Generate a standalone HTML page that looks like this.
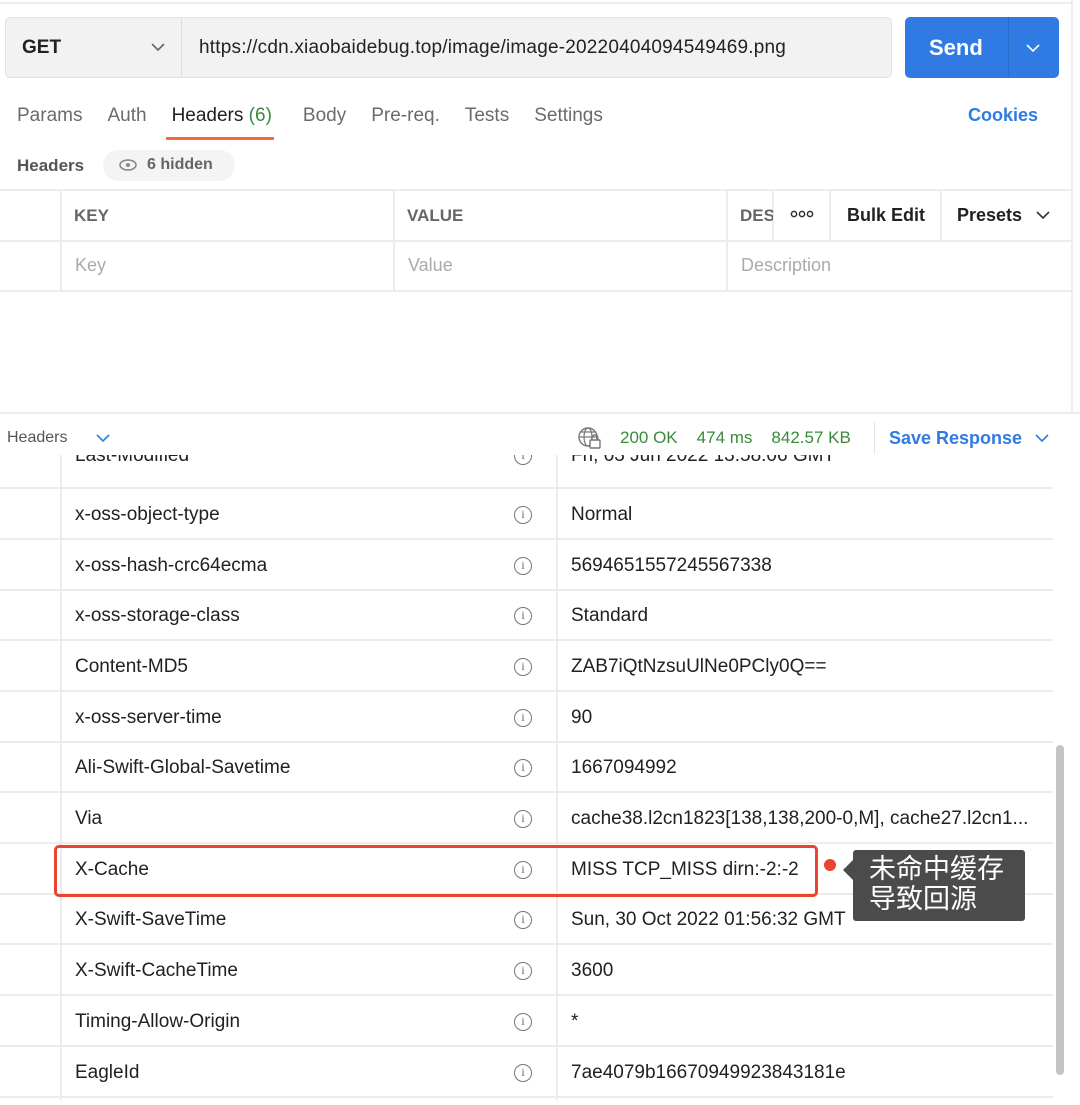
<!DOCTYPE html>
<html><head><meta charset="utf-8"><style>
*{box-sizing:border-box;margin:0;padding:0}
body{width:1080px;height:1105px;background:#fff;font-family:"Liberation Sans","Noto Sans CJK SC",sans-serif;position:relative;overflow:hidden;color:#212121}
.a{position:absolute}
.row{position:absolute;left:0;width:1053px;height:51px;border-bottom:2px solid #ececec;font-size:19px}
.row .k{position:absolute;left:75px;top:15px}
.row .v{position:absolute;left:571px;top:15px;white-space:nowrap}
.row .i{position:absolute;left:514px;top:17px;width:18px;height:18px;border:1.5px solid #777;border-radius:50%;font-size:12px;color:#666;text-align:center;line-height:15px;font-family:"Liberation Serif",serif}
.vl{position:absolute;width:2px;background:#ececec}
</style></head><body>
<div class="a" style="left:0;top:2px;width:1072px;height:2px;background:#eee"></div>
<div class="a" style="left:1071px;top:0;width:2px;height:412px;background:#eee"></div>
<div class="a" style="left:5px;top:17px;width:887px;height:61px;background:#f2f2f2;border:1px solid #e3e3e3;border-radius:5px"></div>
<div class="a" style="left:181px;top:18px;width:1px;height:59px;background:#ddd"></div>
<div class="a" style="left:22px;top:37px;font-size:19px;font-weight:bold;color:#222">GET</div>
<svg class="a" style="left:150px;top:41px" width="16" height="12"><path d="M2 3l6 6 6-6" fill="none" stroke="#666" stroke-width="1.6"/></svg>
<div class="a" style="left:199px;top:37px;font-size:19px;color:#222;letter-spacing:0.2px">https://cdn.xiaobaidebug.top/image/image-20220404094549469.png</div>
<div class="a" style="left:905px;top:17px;width:154px;height:61px;background:#2f7be3;border-radius:5px"></div>
<div class="a" style="left:1008px;top:17px;width:1px;height:61px;background:#2a6ccc"></div>
<div class="a" style="left:929px;top:35px;font-size:22px;font-weight:bold;color:#fff">Send</div>
<svg class="a" style="left:1025px;top:42px" width="16" height="12"><path d="M2 3l6 6 6-6" fill="none" stroke="#fff" stroke-width="1.6"/></svg>
<div class="a" style="left:17px;top:105px;font-size:19px;color:#6b6b6b;white-space:nowrap">Params<span style="margin-left:25px">Auth</span><span style="margin-left:25px;color:#212121">Headers <span style="color:#3a8a3a">(6)</span></span><span style="margin-left:31px">Body</span><span style="margin-left:25px">Pre-req.</span><span style="margin-left:25px">Tests</span><span style="margin-left:25px">Settings</span></div>
<div class="a" style="left:166px;top:137px;width:108px;height:3px;background:#f26b3a"></div>
<div class="a" style="left:968px;top:105px;font-size:18px;font-weight:bold;color:#2f7be3">Cookies</div>
<div class="a" style="left:17px;top:156px;font-size:17px;font-weight:bold;color:#555">Headers</div>
<div class="a" style="left:103px;top:150px;width:132px;height:31px;background:#f4f4f4;border-radius:16px"></div>
<svg class="a" style="left:118px;top:158px" width="20" height="14"><ellipse cx="10" cy="7" rx="8" ry="5" fill="none" stroke="#888" stroke-width="1.6"/><circle cx="10" cy="7" r="2" fill="#888"/></svg>
<div class="a" style="left:147px;top:156px;font-size:16px;font-weight:bold;color:#666">6 hidden</div>
<div class="a" style="left:0;top:189px;width:1072px;height:2px;background:#ececec"></div>
<div class="a" style="left:0;top:240px;width:1072px;height:2px;background:#ececec"></div>
<div class="a" style="left:0;top:290px;width:1072px;height:2px;background:#ececec"></div>
<div class="vl" style="left:60px;top:190px;height:101px"></div>
<div class="vl" style="left:393px;top:190px;height:101px"></div>
<div class="vl" style="left:726px;top:190px;height:101px"></div>
<div class="vl" style="left:772px;top:190px;height:51px"></div>
<div class="vl" style="left:829px;top:190px;height:51px"></div>
<div class="vl" style="left:940px;top:190px;height:51px"></div>
<div class="a" style="left:74px;top:206px;font-size:17px;font-weight:bold;color:#666">KEY</div>
<div class="a" style="left:407px;top:206px;font-size:17px;font-weight:bold;color:#666">VALUE</div>
<div class="a" style="left:740px;top:206px;width:33px;overflow:hidden;font-size:17px;font-weight:bold;color:#666">DESCRIPTION</div>
<svg class="a" style="left:790px;top:209px" width="24" height="10"><circle cx="4" cy="5" r="2.6" fill="none" stroke="#333" stroke-width="1.5"/><circle cx="12" cy="5" r="2.6" fill="none" stroke="#333" stroke-width="1.5"/><circle cx="20" cy="5" r="2.6" fill="none" stroke="#333" stroke-width="1.5"/></svg>
<div class="a" style="left:847px;top:205px;font-size:18px;font-weight:bold;color:#222">Bulk Edit</div>
<div class="a" style="left:957px;top:205px;font-size:18px;font-weight:bold;color:#222">Presets</div>
<svg class="a" style="left:1035px;top:209px" width="16" height="12"><path d="M2 3l6 6 6-6" fill="none" stroke="#333" stroke-width="1.6"/></svg>
<div class="a" style="left:75px;top:255px;font-size:18px;color:#aaa">Key</div>
<div class="a" style="left:408px;top:255px;font-size:18px;color:#aaa">Value</div>
<div class="a" style="left:741px;top:255px;font-size:18px;color:#aaa">Description</div>
<div class="a" style="left:0;top:412px;width:1080px;height:2px;background:#ececec"></div>
<div class="a" style="left:7px;top:429px;font-size:16px;color:#555">Headers</div>
<svg class="a" style="left:95px;top:432px" width="16" height="12"><path d="M2 3l6 6 6-6" fill="none" stroke="#2f7be3" stroke-width="1.6"/></svg>
<svg class="a" style="left:577px;top:426px" width="26" height="24"><circle cx="11" cy="11" r="9" fill="none" stroke="#777" stroke-width="1.4"/><ellipse cx="11" cy="11" rx="4" ry="9" fill="none" stroke="#777" stroke-width="1.2"/><path d="M2 11h18M4 6h14" stroke="#777" stroke-width="1.2"/><rect x="13" y="14" width="10" height="8" rx="1" fill="#fff" stroke="#777" stroke-width="1.4"/><path d="M15 14v-2a3 3 0 016 0v2" fill="none" stroke="#777" stroke-width="1.4"/></svg>
<div class="a" style="left:620px;top:428px;font-size:17px;color:#3a8a3a;white-space:nowrap">200 OK<span style="margin-left:19px">474 ms</span><span style="margin-left:19px">842.57 KB</span></div>
<div class="a" style="left:874px;top:422px;width:1px;height:32px;background:#e5e5e5"></div>
<div class="a" style="left:889px;top:428px;font-size:18px;font-weight:bold;color:#2f7be3">Save Response</div>
<svg class="a" style="left:1034px;top:432px" width="16" height="12"><path d="M2 3l6 6 6-6" fill="none" stroke="#2f7be3" stroke-width="1.6"/></svg>
<div class="a" style="left:0;top:455px;width:1080px;height:650px;overflow:hidden">
<div class="vl" style="left:60px;top:0;height:645px"></div>
<div class="vl" style="left:556px;top:0;height:645px"></div>
<div class="row" style="top:-17px"><span class="k" style="top:7px">Last-Modified</span><span class="i" style="top:9px">i</span><span class="v" style="top:7px">Fri, 03 Jun 2022 13:58:06 GMT</span></div>
<div class="row" style="top:34px"><span class="k">x-oss-object-type</span><span class="i">i</span><span class="v">Normal</span></div>
<div class="row" style="top:85px"><span class="k">x-oss-hash-crc64ecma</span><span class="i">i</span><span class="v">5694651557245567338</span></div>
<div class="row" style="top:135px"><span class="k">x-oss-storage-class</span><span class="i">i</span><span class="v">Standard</span></div>
<div class="row" style="top:186px"><span class="k">Content-MD5</span><span class="i">i</span><span class="v">ZAB7iQtNzsuUlNe0PCly0Q==</span></div>
<div class="row" style="top:237px"><span class="k">x-oss-server-time</span><span class="i">i</span><span class="v">90</span></div>
<div class="row" style="top:287px"><span class="k">Ali-Swift-Global-Savetime</span><span class="i">i</span><span class="v">1667094992</span></div>
<div class="row" style="top:338px"><span class="k">Via</span><span class="i">i</span><span class="v">cache38.l2cn1823[138,138,200-0,M], cache27.l2cn1...</span></div>
<div class="row" style="top:389px"><span class="k">X-Cache</span><span class="i">i</span><span class="v">MISS TCP_MISS dirn:-2:-2</span></div>
<div class="row" style="top:439px"><span class="k">X-Swift-SaveTime</span><span class="i">i</span><span class="v">Sun, 30 Oct 2022 01:56:32 GMT</span></div>
<div class="row" style="top:490px"><span class="k">X-Swift-CacheTime</span><span class="i">i</span><span class="v">3600</span></div>
<div class="row" style="top:541px"><span class="k">Timing-Allow-Origin</span><span class="i">i</span><span class="v">*</span></div>
<div class="row" style="top:592px"><span class="k">EagleId</span><span class="i">i</span><span class="v">7ae4079b16670949923843181e</span></div>
</div>
<div class="a" style="left:1056px;top:745px;width:8px;height:330px;background:#c4c4c4;border-radius:4px"></div>
<div class="a" style="left:54px;top:845px;width:764px;height:52px;border:3px solid #e8452c;border-radius:5px"></div>
<div class="a" style="left:824px;top:859px;width:12px;height:12px;background:#e8452c;border-radius:50%"></div>
<div class="a" style="left:853px;top:850px;width:172px;height:71px;background:#4b4b4b;border-radius:3px"></div>
<div class="a" style="left:843px;top:860px;width:0;height:0;border-top:10px solid transparent;border-bottom:10px solid transparent;border-right:10px solid #4b4b4b"></div>
<div class="a" style="left:869px;top:852px;font-size:27px;line-height:30px;color:#fff;font-family:'Noto Sans CJK SC',sans-serif;white-space:nowrap">未命中缓存<br>导致回源</div>
</body></html>
